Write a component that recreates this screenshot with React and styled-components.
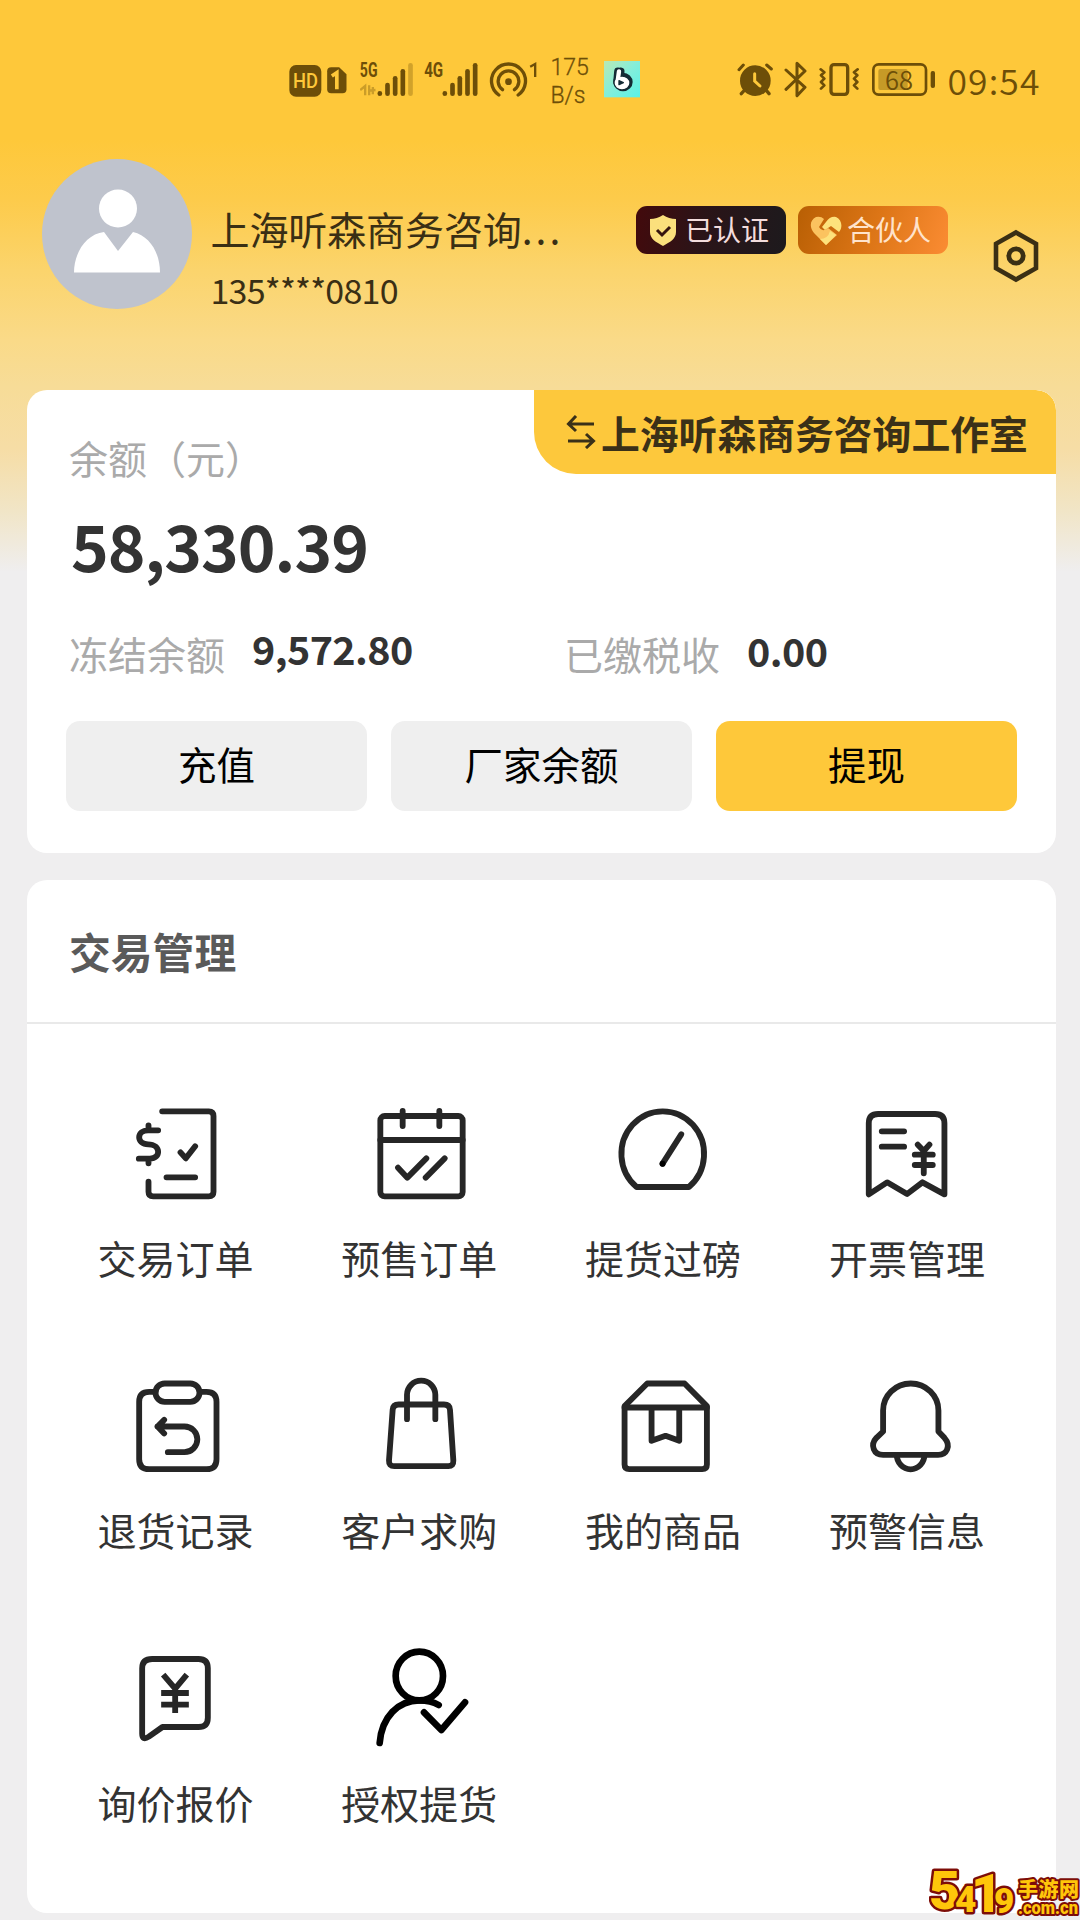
import React from "react";
import styled, { createGlobalStyle } from "styled-components";

const SANS = '"Noto Sans CJK SC", "Noto Sans", sans-serif';
const STATUS = "#6d4e08";

const Global = createGlobalStyle`
  * { box-sizing: border-box; }
  body { margin: 0; background: #efeeef; font-family: ${SANS}; color: #333; }
`;

const Page = styled.div`
  position: relative;
  width: 1080px;
  height: 1920px;
  overflow: hidden;
  background: linear-gradient(
    #fec83a 0, #fec83a 140px, #fdcb4b 200px, #fbd46c 270px, #fada88 340px,
    #f7dc97 385px, #f6dda6 450px, #f1e5c6 510px, #efeeef 572px
  );
`;

const StatusBar = styled.header`
  display: flex;
  height: 120px;
  padding: 40px 0 0 289px;
  color: ${STATUS};
`;

const Glyph = styled.svg`
  display: block;
  flex: none;
  width: ${(p) => p.$w}px;
  height: 80px;
  margin-left: ${(p) => p.$gap || 0}px;
`;

const NetSpeed = styled.div`
  width: 50px;
  margin-left: 13px;
  padding-top: 14px;
  font: 300 23px/28px Roboto, sans-serif;
  -webkit-text-stroke: 0.3px ${STATUS};
`;

const Clock = styled.div`
  margin-left: 12px;
  font-size: 35.5px;
  font-weight: 350;
  line-height: 80px;
  letter-spacing: 1.1px;
  white-space: nowrap;
`;

const Profile = styled.section`
  display: flex;
  align-items: flex-start;
  height: 270px;
  padding: 39px 41px 0 42px;
`;

const Avatar = styled.svg`
  display: block;
  flex: none;
  width: 150px;
  height: 150px;
`;

const Identity = styled.div`
  width: 425.5px;
  margin-left: 18.5px;
  padding-top: 38.5px;
  color: #3a2f14;
`;

const Name = styled.div`
  font-size: 39px;
  line-height: 60px;
  letter-spacing: -0.1px;
  white-space: nowrap;
`;

const Dots = styled.span`
  letter-spacing: 3px;
`;

const Phone = styled.div`
  font-size: 34px;
  line-height: 63px;
  letter-spacing: -0.75px;
`;

const Badges = styled.div`
  display: flex;
  gap: 12px;
  padding-top: 47px;
`;

const Badge = styled.div`
  display: flex;
  align-items: center;
  width: 150px;
  height: 48px;
  padding-left: 12px;
  border-radius: 11px;
  background: ${(p) => p.$bg};
  color: ${(p) => p.$color};
  font-size: 28px;
  line-height: 44px;
  white-space: nowrap;
`;

const BadgeLabel = styled.span`
  margin-top: -2px;
`;

const BadgeIcon = styled.svg`
  width: 32px;
  height: 34px;
  margin-right: 5px;
  flex: none;
`;

const Settings = styled.svg`
  width: 46px;
  height: 54px;
  margin: 70px 0 0 44.5px;
  flex: none;
`;

const Card = styled.section`
  width: 1029px;
  height: ${(p) => p.$h}px;
  margin: 0 0 27px 27px;
  border-radius: 20px;
  background: #fff;
  overflow: hidden;
`;

const BalanceTop = styled.div`
  display: flex;
  justify-content: space-between;
  height: 98px;
  padding-left: 42px;
`;

const Muted = styled.span`
  color: #aaa;
  font-size: 39px;
  line-height: 60px;
  white-space: nowrap;
`;

const BalanceLabel = styled(Muted)`
  margin-top: 37px;
`;

const Switcher = styled.div`
  display: flex;
  align-items: center;
  width: 522px;
  height: 84px;
  padding-left: 32px;
  border-radius: 0 20px 0 42px;
  background: #fdc83c;
  color: #3a3018;
  font-size: 38.8px;
  font-weight: 700;
  line-height: 84px;
  white-space: nowrap;
`;

const SwapIcon = styled.svg`
  width: 30px;
  height: 34px;
  margin-right: 5px;
  flex: none;
`;

const Amount = styled.div`
  margin: 14px 0 37px;
  padding-left: 44px;
  font-size: 64px;
  font-weight: 700;
  line-height: 84px;
  letter-spacing: -1px;
`;

const Stats = styled.div`
  display: grid;
  grid-template-columns: 495px 1fr;
  height: 60px;
  padding-left: 42px;
`;

const Stat = styled.div`
  display: flex;
  gap: 27px;
`;

const StatValue = styled.span`
  margin-top: ${(p) => p.$shift}px;
  font-size: 39.5px;
  font-weight: 700;
  line-height: 60px;
  letter-spacing: -0.6px;
`;

const Actions = styled.div`
  display: grid;
  grid-template-columns: repeat(3, 1fr);
  gap: 24px;
  padding: 38px 39px 0;
`;

const Action = styled.button`
  height: 90px;
  padding: 0 0 6px;
  border: 0;
  border-radius: 14px;
  background: ${(p) => (p.$primary ? "#fec83a" : "#efefef")};
  color: #000;
  font-family: ${SANS};
  font-size: 38.5px;
  line-height: 60px;
`;

const CardTitle = styled.h2`
  height: 144px;
  margin: 0;
  padding-left: 42px;
  border-bottom: 2px solid #e9e9e9;
  color: #5a5a5a;
  font-size: 41.8px;
  font-weight: 700;
  line-height: 142px;
`;

const Menu = styled.div`
  display: grid;
  grid-template-columns: repeat(4, 243.8px);
  grid-auto-rows: 272.3px;
  padding: 76px 0 0 26.6px;
`;

const MenuItem = styled.div`
  display: flex;
  flex-direction: column;
  align-items: center;
`;

const MenuIcon = styled.svg`
  width: 110px;
  height: 110px;
  fill: none;
  stroke: #262626;
  stroke-width: 17.5;
  stroke-linecap: round;
  stroke-linejoin: round;
`;

const MenuLabel = styled.div`
  margin-top: 17px;
  font-size: 39px;
  line-height: 60px;
  white-space: nowrap;
`;

const Watermark = styled.svg`
  position: absolute;
  right: 0;
  bottom: 0;
  width: 151px;
  height: 80px;
`;

const items = [
  {
    label: "交易订单",
    box: "121.5 60 330 330",
    art: (
      <>
        <path d="M248 94H388Q402 94 402 108V335Q402 349 388 349H221Q207 349 207 335V305" />
        <path d="M236 151H206C170 151 170 193 206 193C245 193 245 236 211 236H178M207 136V151M207 236V250" />
        <path d="M303 217L319 235L347 199M261 292H347" />
      </>
    ),
  },
  {
    label: "预售订单",
    box: "853 60 330 330",
    art: (
      <>
        <rect x="902" y="108" width="247" height="241" rx="13" />
        <path d="M902 180H1149M969 93V138M1079 93V138M955 263L983 293L1040 235M1038 293L1095 235" />
      </>
    ),
  },
  {
    label: "提货过磅",
    box: "84.3 60 330 330",
    art: (
      <>
        <path d="M170 321A124 128 0 1 1 327 321Z" />
        <path d="M248 251L304 163" />
        <circle cx="248" cy="251" r="9" fill="#000" stroke="none" />
      </>
    ),
  },
  {
    label: "开票管理",
    box: "815.7 60 330 330",
    art: (
      <>
        <path d="M866 343V130Q866 102 894 102H1065Q1093 102 1093 130V343L1027 307L981 342L921 307Z" />
        <path d="M905 154H972M905 200H972M1013 194L1031 213L1048 194M1031 213V280M1004 224H1058M1004 255H1058" />
      </>
    ),
  },
  {
    label: "退货记录",
    box: "121.5 34.5 330 330",
    art: (
      <>
        <path d="M228 94H209Q179 94 179 124V296Q179 326 209 326H381Q411 326 411 296V124Q411 94 381 94H362" />
        <rect x="228" y="69" width="132" height="55" rx="27.5" />
        <path d="M234 198H315A38.5 38.5 0 0 1 315 275H265M254 178L234 198L254 219" />
      </>
    ),
  },
  {
    label: "客户求购",
    box: "853 34.5 330 330",
    art: (
      <>
        <path d="M957 132H1093Q1110 132 1111 148L1121 300Q1122 317 1106 317H944Q927 317 928 300L939 148Q940 132 957 132Z" />
        <path d="M982 176V103A42.5 42.5 0 0 1 1067 103V176" />
      </>
    ),
  },
  {
    label: "我的商品",
    box: "84.3 34.5 330 330",
    art: (
      <>
        <path d="M202 69H314L381 137V312Q381 326 367 326H148Q134 326 134 312V137Z" />
        <path d="M134 141H381M215 141V241L257 226L298 241V141" />
      </>
    ),
  },
  {
    label: "预警信息",
    box: "815.7 34.5 330 330",
    art: (
      <>
        <path d="M909 213V150A83 81 0 0 1 1075 150V213L1093 232C1114 256 1100 283 1074 283H909C881 283 869 254 889 232Z" />
        <path d="M950 283A41 43 0 0 0 1033 283" />
      </>
    ),
  },
  {
    label: "询价报价",
    box: "120.5 74 330 330",
    art: (
      <>
        <path d="M217 116H356Q384 116 384 144V292Q384 320 356 320H248L207 349Q187 362 187 340V144Q187 116 217 116Z" />
        <path
          strokeLinecap="butt"
          d="M250 163L286 205L321 163M286 205V278M244 218H327M244 253H327"
        />
      </>
    ),
  },
  {
    label: "授权提货",
    box: "853 74 330 330",
    art: (
      <g stroke="#000" strokeWidth="20">
        <ellipse cx="1019" cy="167" rx="71" ry="73" />
        <path d="M900 368C906 290 956 240 1019 240Q1054 240 1077 254M1033 276L1085 329L1156 246" />
      </g>
    ),
  },
];

const Bars = ({ xs, tops, faint }) =>
  xs.map((x, i) => (
    <path
      key={x}
      d={`M${x} 161V${tops[i]}`}
      stroke={STATUS}
      strokeWidth="14"
      strokeLinecap="round"
      opacity={faint && i === xs.length - 1 ? 0.3 : 1}
    />
  ));

const statusText = {
  fontFamily: "Roboto, sans-serif",
  fontWeight: 700,
  fill: STATUS,
  lengthAdjust: "spacingAndGlyphs",
};

function StatusIcons() {
  return (
    <>
      <Glyph $w={33} viewBox="57 0 99 240">
        <rect x="58" y="75" width="96" height="95" rx="20" fill={STATUS} />
        <text {...statusText} x="69" y="145" fontSize="58" textLength="75" fill="#fec83a" fontWeight={500}>HD</text>
      </Glyph>
      <Glyph $w={20} $gap={4.5} viewBox="169.5 0 60 240">
        <path d="M182 82H206L228 103V148Q228 160 216 160H182Q170 160 170 148V94Q170 82 182 82Z" fill={STATUS} />
        <path d="M184 108L199 98V148" fill="none" stroke="#fec83a" strokeWidth="11" />
      </Glyph>
      <Glyph $w={54} $gap={13} viewBox="271.5 0 162 240">
        <text {...statusText} x="271" y="112" fontSize="58" textLength="53">5G</text>
        <g opacity=".35" stroke={STATUS} strokeWidth="7" fill="none">
          <path d="M272 150L287 138V166M299 136V166M299 152L318 150M310 141V163" />
        </g>
        <Bars xs={[331, 354, 377, 400, 423]} tops={[160, 135, 115, 94, 76]} faint />
      </Glyph>
      <Glyph $w={55} $gap={10} viewBox="463.5 0 165 240">
        <text {...statusText} x="464" y="112" fontSize="58" textLength="57">4G</text>
        <Bars xs={[526, 549, 571, 594, 617]} tops={[160, 135, 115, 94, 76]} />
      </Glyph>
      <Glyph $w={50} $gap={9} viewBox="655.5 0 150 240" fill="none" stroke={STATUS} strokeWidth="10">
        <path d="M688 165A51 51 0 1 1 746 165" strokeLinecap="round" />
        <path d="M699 149A31 31 0 1 1 735 149" strokeLinecap="round" />
        <circle cx="717" cy="125" r="10" fill={STATUS} stroke="none" />
        <path d="M782 80L797 72V111" strokeWidth="7" />
      </Glyph>
      <NetSpeed>175<br />B/s</NetSpeed>
      <Glyph $w={36} $gap={3} viewBox="1002 0 108 240">
        <defs>
          <linearGradient id="mint" x1="0" y1="0" x2="1" y2="1">
            <stop offset="0" stopColor="#b9e9b4" />
            <stop offset=".5" stopColor="#83eedb" />
            <stop offset="1" stopColor="#58f2e6" />
          </linearGradient>
        </defs>
        <rect x="1002" y="63" width="108" height="109" fill="url(#mint)" />
        <g fill="#142b35" stroke="#142b35" strokeLinecap="round">
          <path d="M1044 94L1041 126M1052 94L1050 116" strokeWidth="23" />
          <ellipse cx="1059" cy="126" rx="25" ry="24" strokeWidth="8" />
        </g>
        <g fill="#fff" stroke="#fff" strokeLinecap="round">
          <path d="M1047 94L1042 130" strokeWidth="13" />
          <ellipse cx="1056" cy="129" rx="20" ry="17" strokeWidth="4" />
        </g>
        <path d="M1047 122L1060 128L1047 134Z" fill="#142b35" stroke="#142b35" strokeWidth="4" strokeLinejoin="round" />
      </Glyph>

      <Glyph $w={36} $gap={97} viewBox="52 0 108 240" stroke={STATUS} strokeLinecap="round" fill="none">
        <circle cx="107" cy="122" r="46" fill={STATUS} stroke="none" />
        <path d="M58 89L71 75M141 75L155 87" strokeWidth="9" />
        <path d="M75 150L65 161M139 150L148 161" strokeWidth="10" />
        <path d="M105 101V123L121 138" stroke="#fec83a" strokeWidth="9" />
      </Glyph>
      <Glyph $w={24} $gap={11} viewBox="193 0 72 240" stroke={STATUS} strokeWidth="9" strokeLinejoin="round" strokeLinecap="round" fill="none">
        <path d="M199 90L256 142L232 167V70L256 93L199 148" />
      </Glyph>
      <Glyph $w={41} $gap={11} viewBox="298 0 123 240" stroke={STATUS} strokeLinejoin="round" strokeLinecap="round" fill="none">
        <rect x="334" y="74" width="50" height="89" rx="9" strokeWidth="10" />
        <path d="M303 88L314 97L304 106L314 116L304 126L314 136L304 146M414 88L403 97L413 106L403 116L413 126L403 136L413 146" strokeWidth="8" />
      </Glyph>
      <Glyph $w={64} $gap={12} viewBox="456 0 192 240">
        <rect x="460" y="73" width="158" height="91" rx="16" fill="none" stroke={STATUS} strokeWidth="8" />
        <rect x="475" y="87" width="88" height="63" rx="6" fill={STATUS} opacity=".38" />
        <text x="495" y="149" fontFamily={SANS} fontWeight="350" fontSize="78" textLength="84" lengthAdjust="spacingAndGlyphs" fill={STATUS}>68</text>
        <rect x="632" y="93" width="13" height="51" rx="6" fill={STATUS} />
      </Glyph>
      <Clock>09:54</Clock>
    </>
  );
}

export default function App() {
  return (
    <Page>
      <Global />
      <StatusBar>
        <StatusIcons />
      </StatusBar>

      <Profile>
        <Avatar viewBox="0 0 150 150">
          <circle cx="75" cy="75" r="75" fill="#bfc3cd" />
          <circle cx="76" cy="49.5" r="19" fill="#fff" />
          <path d="M32 113.500C32 94 44 75 62 73L76 92L91 73C108 77 118 94 118 113.500Z" fill="#fff" />
        </Avatar>
        <Identity>
          <Name>上海听森商务咨询<Dots>...</Dots></Name>
          <Phone>135****0810</Phone>
        </Identity>
        <Badges>
          <Badge $bg="linear-gradient(100deg, #430a0c, #2a1418 45%, #1d1a1d)" $color="#f3dcdc">
            <BadgeIcon viewBox="0 0 32 34">
              <path d="M2 6Q9 6 15 2Q21 6 28 6V19C28 26 22 29 15 33C8 29 2 26 2 19Z" fill="#fbe07c" />
              <path d="M9 17L14 22L22 14" fill="none" stroke="#35150f" strokeWidth="3" />
            </BadgeIcon>
            <BadgeLabel>已认证</BadgeLabel>
          </Badge>
          <Badge $bg="linear-gradient(110deg, #b85f04, #dc7516 50%, #fb8c33)" $color="#ffe3cb">
            <BadgeIcon viewBox="0 0 32 34">
              <path d="M16 32L4 20C-1 14 0 7 6 4Q11 3 14 6L9 14Q12 20 18 15L27 22Z" fill="#fbc35f" />
              <path d="M16 9Q20 3 26 4C32 7 33 14 29 19L21 13L15 17L12 14Z" fill="#fde27c" />
              <path d="M16 32L10 26Q18 26 20 18L26 22Z" fill="#fde27c" />
            </BadgeIcon>
            <BadgeLabel>合伙人</BadgeLabel>
          </Badge>
        </Badges>
        <Settings viewBox="0 0 46 54" fill="none" stroke="#3a2f14">
          <path d="M23 3.500L43 14.800V39.200L23 50.500L3 39.200V14.800Z" strokeWidth="4.600" />
          <circle cx="23" cy="27" r="7.200" strokeWidth="4.800" />
        </Settings>
      </Profile>

      <Card $h={463}>
        <BalanceTop>
          <BalanceLabel>余额（元）</BalanceLabel>
          <Switcher>
            <SwapIcon viewBox="0 0 30 34" fill="none" stroke="#3a3018" strokeWidth="3">
              <path d="M28 9H3M10 1L2.500 9L10 16M2 26H27M20 19L27.500 26L20 33" />
            </SwapIcon>
            上海听森商务咨询工作室
          </Switcher>
        </BalanceTop>
        <Amount>58,330.39</Amount>
        <Stats>
          <Stat>
            <Muted>冻结余额</Muted>
            <StatValue $shift={-5}>9,572.80</StatValue>
          </Stat>
          <Stat>
            <Muted>已缴税收</Muted>
            <StatValue $shift={-3}>0.00</StatValue>
          </Stat>
        </Stats>
        <Actions>
          <Action>充值</Action>
          <Action>厂家余额</Action>
          <Action $primary>提现</Action>
        </Actions>
      </Card>

      <Card $h={1033}>
        <CardTitle>交易管理</CardTitle>
        <Menu>
          {items.map((it) => (
            <MenuItem key={it.label}>
              <MenuIcon viewBox={it.box}>{it.art}</MenuIcon>
              <MenuLabel>{it.label}</MenuLabel>
            </MenuItem>
          ))}
        </Menu>
      </Card>

      <Watermark
        viewBox="-1 -24 151 80"
        fill="#ffc60a"
        stroke="#7d0d08"
        strokeWidth="5"
        strokeLinejoin="round"
        paintOrder="stroke"
        fontFamily="Roboto, sans-serif"
        fontWeight="900"
      >
        <text>
          <tspan x="-1" y="45" fontSize="54">5</tspan>
          <tspan x="25" y="48" fontSize="37">4</tspan>
          <tspan x="41" y="48" fontSize="54">1</tspan>
          <tspan x="64" y="49" fontSize="35">9</tspan>
        </text>
        <text x="88" y="33" fontSize="20" textLength="61" strokeWidth="4" fontFamily={SANS}>手游网</text>
        <text x="88" y="50" fontSize="18" textLength="60" lengthAdjust="spacingAndGlyphs" strokeWidth="4">.com.cn</text>
      </Watermark>
    </Page>
  );
}
